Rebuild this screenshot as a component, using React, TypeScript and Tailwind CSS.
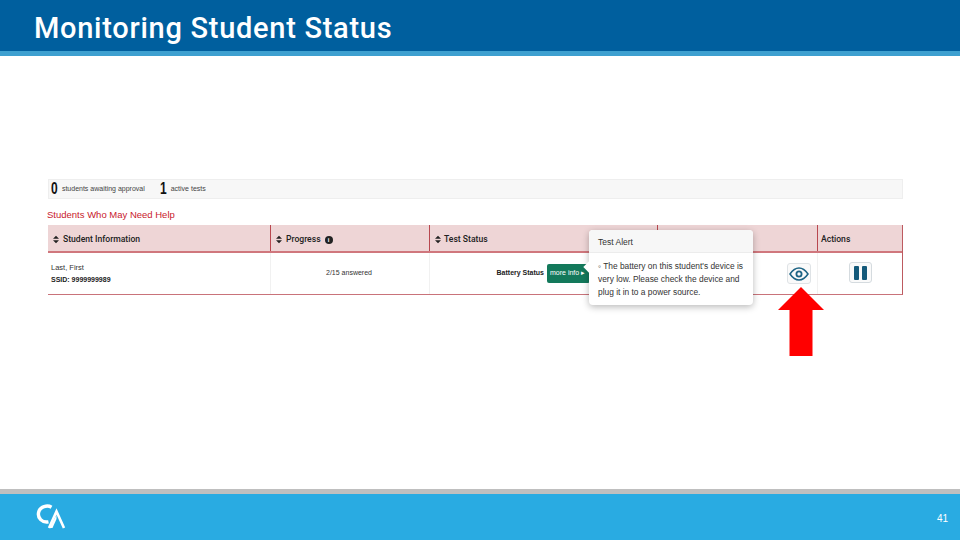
import React from 'react';

const Sort = () => (
  <svg width="6" height="9" viewBox="0 0 7 9" className="shrink-0" fill="#222">
    <path d="M3.5 0 7 3.6H0zM3.5 9 0 5.4h7z" />
  </svg>
);

const Logo = () => (
  <svg width="32" height="26" viewBox="0 0 32 26" fill="none" stroke="#fff">
    <path d="M16.5 3.2C12.5 0.8 5 2.2 3.6 8.4 2.4 14 7 19 13.5 17.8" strokeWidth="3.4" />
    <path d="M14 24 21.5 7.5 29 24" strokeWidth="2.6" />
    <path d="M14.5 24 21.5 11 21.5 15 17.5 24z" fill="#fff" stroke="none" />
  </svg>
);

const App = () => {
  return (
    <div className="w-[960px] h-[540px] bg-white flex flex-col overflow-hidden font-['Liberation_Sans',sans-serif]">
      <header className="h-[56px] shrink-0 bg-[#005f9e] border-b-[5px] border-[#3ea0d0] pl-[34px] flex items-center">
        <h1 className="text-[29px] leading-none text-white font-medium font-['Roboto',sans-serif] tracking-[0.72px] pt-[5px]">Monitoring Student Status</h1>
      </header>

      <main className="flex-1 pt-[123px] pl-[48px] pr-[57px]">
        <div className="relative">
          <div className="h-[20px] bg-[#f7f7f7] border border-[#eeeeee] flex items-center pl-[2px] text-[7px] text-[#444]">
            <span className="text-[16px] leading-none font-bold text-[#111] mr-[2px] scale-x-75 origin-left">0</span>
            <span>students awaiting approval</span>
            <span className="text-[16px] leading-none font-bold text-[#111] ml-[15px] mr-[2px] scale-x-75 origin-left">1</span>
            <span>active tests</span>
          </div>

          <h2 className="mt-[10px] h-[16px] text-[9.5px] leading-[12px] text-[#c8202c] -ml-[1px]">Students Who May Need Help</h2>

          <div className="border-b border-r border-[#bd5a60] border-b-[#c9737a]">
            <div className="grid grid-cols-[222px_159px_228px_160px_1fr] h-[28px] pt-[3px] bg-[#eed5d6] border-b-2 border-[#d0777d] text-[8.6px] font-medium text-[#222] font-['Roboto',sans-serif]">
              <div className="flex items-center gap-[4px] pl-[5px]"><Sort />Student Information</div>
              <div className="flex items-center gap-[4px] pl-[5px] border-l border-[#b8474f] -mt-[3px] pt-[3px]">
                <Sort />Progress
                <span className="w-[8px] h-[8px] rounded-full bg-[#222] text-white text-[6px] leading-[8px] text-center font-bold">i</span>
              </div>
              <div className="flex items-center gap-[3px] pl-[5px] border-l border-[#b8474f] -mt-[3px] pt-[3px]"><Sort />Test Status</div>
              <div className="border-l border-[#b8474f] -mt-[3px]" />
              <div className="flex items-center pl-[3px] border-l border-[#b8474f] -mt-[3px] pt-[3px]">Actions</div>
            </div>
            <div className="grid grid-cols-[222px_159px_228px_160px_1fr] h-[41px] text-[7.5px] text-[#333]">
              <div className="flex flex-col justify-center gap-[3px] pl-[3px] leading-[9px]">
                <span>Last, First</span>
                <span className="font-bold text-[7px] text-[#222]">SSID: 9999999989</span>
              </div>
              <div className="flex items-center justify-center border-l border-[#f1f1f1] pr-[2px] text-[7px]">2/15 answered</div>
              <div className="flex items-center justify-end border-l border-[#f1f1f1] pr-[67px] gap-[3px] text-[7px]">
                <span className="font-bold text-[#222] whitespace-nowrap">Battery Status</span>
                <span className="w-[43px] h-[19px] shrink-0 bg-[#13795b] rounded-[2px] text-white flex items-center pl-[3px] whitespace-nowrap">more info ▸</span>
              </div>
              <div className="flex items-center justify-end pr-[6px]">
                <div className="w-[24px] h-[21px] rounded-[3px] border border-[#dfe3e6] bg-[#fafafa] flex items-center justify-center">
                  <svg width="20" height="14" viewBox="0 0 20 14" fill="none" stroke="#1d6485" strokeWidth="1.5">
                    <path d="M1 7C4 2.6 7 1 10 1s6 1.6 9 6c-3 4.4-6 6-9 6S4 11.4 1 7z" />
                    <circle cx="10" cy="7" r="2.6" strokeWidth="1.8" />
                  </svg>
                </div>
              </div>
              <div className="flex items-center justify-center border-l border-[#f1f1f1] pb-[2px]">
                <div className="w-[23px] h-[21px] rounded-[3px] border border-[#d5dbdf] bg-[#fafafa] flex items-center justify-center gap-[3px]">
                  <span className="w-[5px] h-[14px] bg-[#14597a] rounded-[1px]" />
                  <span className="w-[5px] h-[14px] bg-[#14597a] rounded-[1px]" />
                </div>
              </div>
            </div>
          </div>

          {/* popover sits over the table */}
          <div className="absolute left-[541px] top-[51px] w-[164px] h-[75px] bg-white rounded-[4px] shadow-[0_2px_7px_rgba(0,0,0,0.28)] text-[8.4px] text-[#333]">
            <div className="h-[23px] bg-[#f7f7f7] border-b border-[#ececec] rounded-t-[4px] pl-[9px] pt-[2px] flex items-center text-[8.5px]">Test Alert</div>
            <p className="pl-[9px] pr-[4px] pt-[7px] leading-[12.8px]">◦ The battery on this student's device is very low. Please check the device and plug it in to a power source.</p>
            <span className="absolute -left-[4px] top-[33px] w-[8px] h-[8px] bg-white rotate-45" />
          </div>

          {/* red callout arrow */}
          <svg className="absolute left-[730px] top-[108px]" width="46" height="69" viewBox="0 0 46 69" fill="#ff0000">
            <path d="M23 0 46 23H34.500V69H11.500V23H0z" />
          </svg>
        </div>
      </main>

      <footer className="h-[51px] shrink-0 bg-[#29abe2] border-t-[5px] border-[#bfbfbf] flex items-center justify-between pl-[35px] pr-[12px]">
        <Logo />
        <span className="text-[10px] text-white mt-[3px]">41</span>
      </footer>
    </div>
  );
};

export default App;
